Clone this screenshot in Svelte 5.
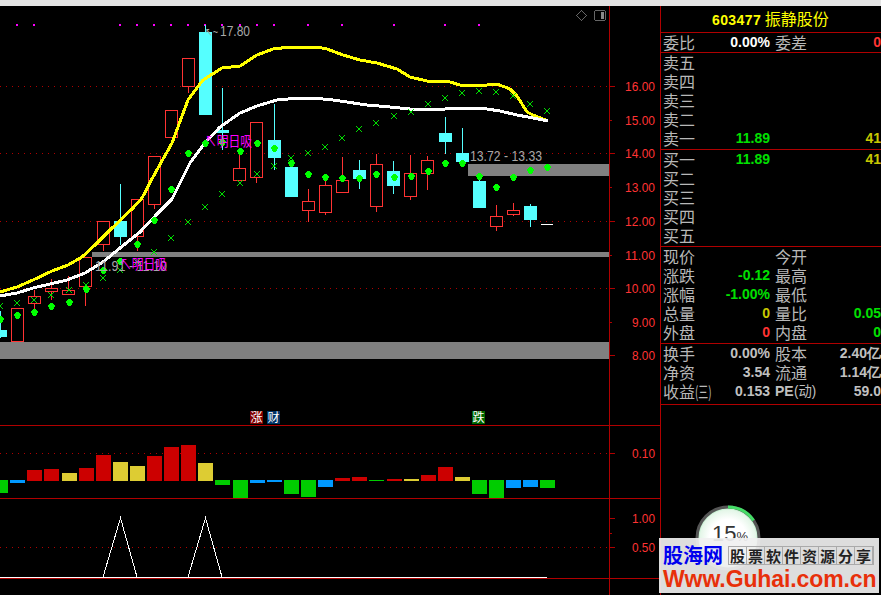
<script>
	// candle slots sit 17.1px apart, wicks land on half pixels
	const slot = (k) => Math.floor(17.5 + 17.1 * k) + 0.5;

	// [slot, top, bottom, wick high, wick low]
	const red = [
		[0, 308, 342, 308, 342], [1, 296, 304, 290, 315], [2, 288, 292, 279, 300], [3, 290, 295, 276, 295],
		[4, 257, 287, 257, 306], [5, 221, 245, 221, 251], [7, 199, 237, 199, 251], [8, 156, 205, 156, 209],
		[9, 110, 138, 110, 138], [10, 58, 87, 58, 93], [13, 168, 181, 155, 181], [14, 122, 178, 122, 183],
		[17, 201, 211, 189, 222], [18, 185, 213, 180, 215], [19, 180, 193, 157, 193], [21, 164, 207, 154, 212],
		[23, 173, 197, 155, 200], [24, 160, 174, 156, 190], [28, 216, 227, 205, 231], [29, 210, 215, 203, 216]
	];
	const cyan = [
		[-1, 330, 337, 311, 338], [6, 221, 237, 184, 245], [11, 32, 115, 25, 115], [12, 130, 133, 88, 150],
		[15, 140, 158, 104, 170], [16, 167, 197, 167, 197], [20, 170, 179, 160, 189], [22, 171, 186, 161, 194],
		[25, 133, 142, 117, 154], [26, 153, 162, 128, 162], [27, 181, 208, 176, 208], [30, 206, 220, 204, 227]
	];

	const yellowLine = '0,292 17,287 33,280 52,271 68,265 82,257 95,245 110,230 133,208 142,198 153,177 172,143 188,100 203,80 222,68 240,66 257,55 273,49 290,47 317,47 327,49 343,55 360,60 377,63 397,69 410,77 427,81 447,81 463,86 470,85 487,85 497,84 510,89 517,96 527,112 533,115 548,121';
	const whiteLine = '0,296 17,293 33,288 50,284 67,280 85,273 103,262 120,248 140,232 158,213 172,199 190,163 205,143 220,127 240,113 257,106 277,100 300,98 313,98 333,100 367,105 390,107 410,109 433,110 457,108 470,108 487,109 500,111 517,115 533,118 548,121';

	const diamonds = [
		[0, 319], [17, 315], [34, 312], [51, 306], [69, 302], [86, 289], [103, 270], [120, 261], [137, 244], [154, 220],
		[171, 189], [188, 153], [205, 143], [222, 142], [240, 151], [257, 143], [274, 148], [291, 163], [308, 174], [325, 177],
		[342, 178], [359, 178], [376, 174], [394, 177], [411, 176], [428, 171], [445, 163], [462, 163], [479, 176], [496, 187],
		[513, 177], [530, 170], [547, 167]
	];
	const crosses = [
		[0, 306], [17, 303], [34, 300], [51, 295], [69, 290], [86, 285], [103, 278], [120, 270], [137, 262], [154, 252],
		[171, 238], [188, 222], [205, 207], [222, 194], [240, 183], [257, 174], [274, 166], [291, 158], [308, 153], [325, 147],
		[342, 138], [359, 129], [376, 123], [394, 116], [411, 112], [428, 104], [445, 98], [462, 93], [479, 91], [496, 92],
		[513, 96], [530, 104], [547, 111]
	];
	const marks = [17, 34, 120, 137, 154, 171, 188, 205, 222, 240, 257, 274, 308, 342, 394, 445, 479];

	// [left, top, bottom, colour]
	const R = '#cc0000', Y = '#ddcc33', G = '#00cc00', B = '#0099ff';
	const bars = [
		[-7, 480, 493, G], [10, 480, 483, B], [27, 470, 481, R], [44, 469, 481, R], [62, 473, 481, Y], [79, 468, 481, R],
		[96, 455, 481, R], [113, 462, 481, Y], [130, 466, 481, Y], [147, 456, 481, R], [164, 447, 481, R], [181, 445, 481, R],
		[198, 463, 481, Y], [215, 480, 485, G], [233, 480, 498, G], [250, 480, 483, B], [267, 480, 482, B], [284, 480, 494, G],
		[301, 480, 497, G], [318, 480, 487, B], [335, 478, 481, R], [352, 477, 481, R], [369, 480, 481, G], [387, 479, 481, R],
		[404, 479, 481, Y], [421, 475, 481, R], [438, 467, 481, R], [455, 477, 481, Y], [472, 480, 494, G], [489, 480, 498, G],
		[506, 480, 488, B], [523, 480, 487, B], [540, 480, 488, G]
	];

	const axis = [
		['16.00', 86], ['15.00', 120], ['14.00', 153], ['13.00', 187], ['12.00', 221], ['11.00', 255], ['10.00', 288],
		['9.00', 322], ['8.00', 355], ['0.10', 453], ['1.00', 518], ['0.50', 547]
	];
	const majorTicks = [86, 153, 221, 288, 355, 453, 518, 547];
	const minorTicks = [120, 187, 255, 322, 533];

	const sell = [
		['卖五', '', '', ''], ['卖四', '', '', ''], ['卖三', '', '', ''], ['卖二', '', '', ''],
		['卖一', '11.89', '', '41']
	];
	const buy = [
		['买一', '11.89', '', '41'],
		['买二', '', '', ''], ['买三', '', '', ''], ['买四', '', '', ''], ['买五', '', '', '']
	];
	const quote = [
		['现价', '', '', '今开', '', ''],
		['涨跌', '-0.12', 'green', '最高', '', ''],
		['涨幅', '-1.00%', 'green', '最低', '', ''],
		['总量', '0', 'olive', '量比', '0.05', 'green'],
		['外盘', '0', 'red', '内盘', '0', 'green']
	];
	const slogan = '股票软件资源分享'.split('');
</script>

<div class="screen">
	<div class="topbar"></div>
	<div class="main">
		<svg class="chart" width="660" height="589" viewBox="0 6 660 589" shape-rendering="crispEdges">
			{#each [86, 153, 221, 288, 453, 547] as y}
				<line x1="0" x2="609" y1={y + 0.5} y2={y + 0.5} stroke="#b00000" stroke-dasharray="1 5" />
			{/each}

			<rect x="0" y="342" width="609" height="17" fill="#808080" />
			<rect x="92" y="252" width="517" height="5" fill="#808080" />
			<rect x="468" y="164" width="141" height="12" fill="#808080" />

			{#each marks as x}
				<rect x={x - 1} y="24" width="2" height="2" fill="#ff00ff" />
			{/each}

			{#each cyan as c}
				<line x1={slot(c[0])} x2={slot(c[0])} y1={c[3]} y2={c[4]} stroke="#55ffff" />
				<rect x={slot(c[0]) - 6.5} y={c[1]} width="13" height={c[2] - c[1]} fill="#55ffff" />
			{/each}
			{#each red as c}
				<line x1={slot(c[0])} x2={slot(c[0])} y1={c[3]} y2={c[4]} stroke="#ff3333" />
				<rect x={slot(c[0]) - 6} y={c[1] + 0.5} width="12" height={c[2] - c[1] - 1} fill="#000" stroke="#ff3333" />
			{/each}
			<line x1="541" x2="553" y1="224.5" y2="224.5" stroke="#fff" />

			<polyline points={yellowLine} fill="none" stroke="#ffff00" stroke-width="3" />
			<polyline points={whiteLine} fill="none" stroke="#ffffff" stroke-width="3" />

			{#each crosses as c}
				<path d="M{c[0] - 3} {c[1] - 3}L{c[0] + 3} {c[1] + 3}M{c[0] + 3} {c[1] - 3}L{c[0] - 3} {c[1] + 3}" stroke="#00e000" fill="none" />
			{/each}
			{#each diamonds as d}
				<polygon points="{d[0] - 1},{d[1] - 3} {d[0] + 2},{d[1] - 3} {d[0] + 4},{d[1]} {d[0] + 2},{d[1] + 4} {d[0] - 1},{d[1] + 4} {d[0] - 3},{d[1]}" fill="#00ff00" />
			{/each}

			<text class="note small" x="205" y="36" textLength="13" lengthAdjust="spacingAndGlyphs">↖~</text>
			<text class="note" x="220" y="36" textLength="30" lengthAdjust="spacingAndGlyphs">17.80</text>
			<text class="note" x="470" y="161" textLength="72" lengthAdjust="spacingAndGlyphs">13.72 - 13.33</text>
			<text class="note" x="95" y="271" textLength="72" lengthAdjust="spacingAndGlyphs">11.91 - 11.10</text>
			<text class="pink" x="205" y="146" textLength="47" lengthAdjust="spacingAndGlyphs">↖明日吸</text>
			<text class="pink" x="120" y="269" textLength="47" lengthAdjust="spacingAndGlyphs">↖明日吸</text>

			<rect x="250" y="411" width="13" height="13" fill="#800000" />
			<text class="tag" x="256.5" y="422">涨</text>
			<rect x="267" y="411" width="13" height="13" fill="#003366" />
			<text class="tag" x="273.5" y="422">财</text>
			<rect x="472" y="411" width="13" height="13" fill="#006600" />
			<text class="tag" x="478.5" y="422">跌</text>

			{#each bars as b}
				<rect x={b[0]} y={b[1]} width="15" height={b[2] - b[1]} fill={b[3]} />
			{/each}

			<polyline points="103,577 120.5,518 137,577" fill="none" stroke="#fff" />
			<polyline points="188,577 205.5,518 222,577" fill="none" stroke="#fff" />
			<rect x="0" y="577" width="547" height="1" fill="#fff" />

			{#each [425, 498, 578] as y}
				<line x1="0" x2="660" y1={y + 0.5} y2={y + 0.5} stroke="#b00000" />
			{/each}
			<line x1="609.5" x2="609.5" y1="6" y2="595" stroke="#b00000" />
			{#each majorTicks as y}
				<line x1="609" x2="615" y1={y + 0.5} y2={y + 0.5} stroke="#b00000" />
			{/each}
			{#each minorTicks as y}
				<line x1="609" x2="612" y1={y + 0.5} y2={y + 0.5} stroke="#b00000" />
			{/each}

			{#each axis as p}
				<text class="axis" x={p[0].length === 5 ? 625 : 632} y={p[1] + 5} textLength={p[0].length === 5 ? 30 : 23} lengthAdjust="spacingAndGlyphs">{p[0]}</text>
			{/each}

			<g fill="none" stroke="#666">
				<path d="M581.5 10.5L586.5 15.5L581.5 20.5L576.5 15.5Z" />
				<rect x="594.5" y="10.5" width="11" height="10" rx="2" />
			</g>
			<rect x="601" y="12" width="3" height="7" fill="#888" />
		</svg>

		<aside class="panel">
			<header class="title"><b>603477</b> 振静股份</header>
			<section class="flush">
				<div class="row">
					<span>委比</span><b class="white">0.00%</b><span>委差</span><b class="red">0</b>
				</div>
			</section>
			<section>
				{#each sell as r}
					<div class="row">
						<span>{r[0]}</span><b class="green">{r[1]}</b><span>{r[2]}</span><b class="olive">{r[3]}</b>
					</div>
				{/each}
			</section>
			<section>
				{#each buy as r}
					<div class="row">
						<span>{r[0]}</span><b class="green">{r[1]}</b><span>{r[2]}</span><b class="olive">{r[3]}</b>
					</div>
				{/each}
			</section>
			<section>
				{#each quote as q}
					<div class="row">
						<span>{q[0]}</span><b class={q[2]}>{q[1]}</b><span>{q[3]}</span><b class={q[5]}>{q[4]}</b>
					</div>
				{/each}
			</section>
			<section class="finance">
				<div class="row"><span>换手</span><b>0.00%</b><span>股本</span><b>2.40亿</b></div>
				<div class="row"><span>净资</span><b>3.54</b><span>流通</span><b>1.14亿</b></div>
				<div class="row">
					<span>收益<em>(三)</em></span><b>0.153</b><span class="latin">PE<em class="tight">(动)</em></span><b>59.0</b>
				</div>
			</section>
		</aside>
	</div>

	<div class="gauge">
		<svg width="68" height="68" viewBox="0 0 68 68">
			<defs>
				<radialGradient id="gauge-fill">
					<stop offset="0.6" stop-color="#ffffff" />
					<stop offset="0.9" stop-color="#e4f6e8" />
					<stop offset="1" stop-color="#9fe6b4" />
				</radialGradient>
			</defs>
			<circle cx="34" cy="34" r="31" fill="url(#gauge-fill)" stroke="#555" stroke-width="3" />
			<circle cx="34" cy="34" r="31" fill="none" stroke="#44dd66" stroke-width="3" stroke-dasharray="30 200" transform="rotate(-90 34 34)" />
		</svg>
		<span class="percent">15<small>%</small></span>
	</div>

	<div class="stamp">
		<div class="stamp-top">
			<strong>股海网</strong>
			<div class="slogan">
				{#each slogan as c}<span>{c}</span>{/each}
			</div>
		</div>
		<div class="url">Www.Guhai.com.cn</div>
	</div>
</div>

<style>
	:global(body) {
		background: #000;
		overflow: hidden;
	}

	.screen {
		position: relative;
		width: 881px;
		height: 595px;
		background: #000;
		overflow: hidden;
		font-family: 'Noto Sans CJK SC', 'Liberation Sans', sans-serif;
	}

	.topbar {
		height: 6px;
		background: #e4e4e4;
	}

	.main {
		display: flex;
	}

	.chart {
		display: block;
		flex: none;
	}

	.note {
		font: 15px 'Liberation Sans', sans-serif;
		fill: #a8a8a8;
	}

	.note.small {
		font-size: 12px;
	}

	.pink {
		font: 14px 'Noto Sans CJK SC', sans-serif;
		fill: #ff00ff;
	}

	.tag {
		font: 12px 'Noto Sans CJK SC', sans-serif;
		fill: #fff;
		text-anchor: middle;
	}

	.axis {
		font: 13.5px 'Liberation Sans', sans-serif;
		fill: #ff3333;
	}

	.panel {
		flex: none;
		width: 221px;
		height: 589px;
		border-left: 1px solid #b00000;
		box-sizing: border-box;
		overflow: hidden;
		color: #b8b8b8;
		font-size: 16px;
	}

	.title {
		height: 26px;
		line-height: 25px;
		border-bottom: 1px solid #b00000;
		padding-left: 51px;
		color: #ffff00;
	}

	.title b {
		font: bold 14px 'Liberation Sans', sans-serif;
		letter-spacing: 0.4px;
	}

	section {
		border-bottom: 1px solid #b00000;
		padding-bottom: 1px;
	}

	section.flush {
		padding-bottom: 0;
	}

	section.finance {
		padding-bottom: 3px;
	}

	.row {
		display: grid;
		grid-template-columns: 50px 57px 5px 40px 66px;
		height: 19px;
		line-height: 18px;
		padding-left: 2px;
		white-space: nowrap;
	}

	.row > :nth-child(3) {
		grid-column: 4;
	}

	.row > :nth-child(4) {
		grid-column: 5;
	}

	.row b {
		font: bold 14px/19px 'Liberation Sans', sans-serif;
		text-align: right;
		color: #c0c0c0;
	}

	.row b.white {
		color: #fff;
	}

	.row b.green {
		color: #00e000;
	}

	.row b.olive {
		color: #c8c800;
	}

	.row b.red {
		color: #ff3333;
	}

	.row em {
		display: inline-block;
		width: 16px;
		font-style: normal;
		transform: scaleX(0.62);
		transform-origin: left;
	}

	.row .latin {
		font: bold 14px/19px 'Liberation Sans', 'Noto Sans CJK SC', sans-serif;
		color: #c0c0c0;
	}

	.row em.tight {
		width: 26px;
		transform: scaleX(0.95);
		font-weight: 400;
	}

	.gauge {
		position: absolute;
		left: 694px;
		top: 504px;
		width: 68px;
		height: 68px;
	}

	.gauge svg {
		display: block;
	}

	.percent {
		position: absolute;
		left: 18px;
		top: 17px;
		font: 22px 'Liberation Sans', sans-serif;
		color: #333;
	}

	.percent small {
		font-size: 13px;
	}

	.stamp {
		position: absolute;
		left: 659px;
		top: 538px;
		width: 220px;
		height: 55px;
		box-sizing: border-box;
		padding: 5px 4px 0;
		background: rgba(240, 240, 240, 0.92);
	}

	.stamp-top {
		display: flex;
		align-items: center;
		justify-content: space-between;
		height: 24px;
	}

	.stamp strong {
		font-size: 20px;
		line-height: 24px;
		font-weight: 700;
		color: #0000ee;
	}

	.slogan {
		display: grid;
		grid-template-columns: repeat(8, 18px);
		margin-right: 2px;
		outline: 1px solid #aaa;
	}

	.slogan span {
		height: 17px;
		line-height: 17px;
		text-align: center;
		font-size: 15px;
		font-weight: 700;
		color: #222;
		border-right: 1px solid #aaa;
		box-sizing: border-box;
	}

	.url {
		font: bold 23px/25px 'Liberation Sans', sans-serif;
		letter-spacing: -0.1px;
		color: #e8300a;
		white-space: nowrap;
	}
</style>
